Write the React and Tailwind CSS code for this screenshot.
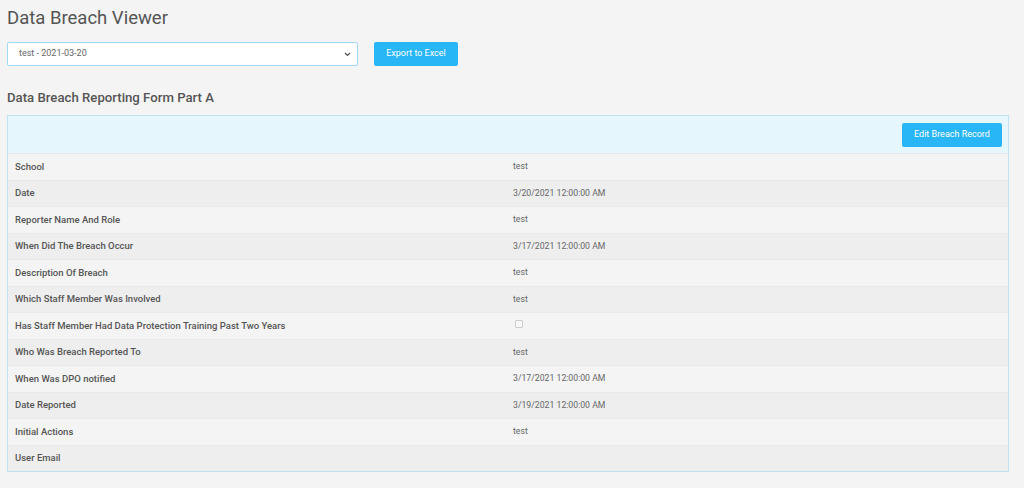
import React from 'react';

const rows = [
  { label: 'School', value: 'test' },
  { label: 'Date', value: '3/20/2021 12:00:00 AM' },
  { label: 'Reporter Name And Role', value: 'test' },
  { label: 'When Did The Breach Occur', value: '3/17/2021 12:00:00 AM' },
  { label: 'Description Of Breach', value: 'test' },
  { label: 'Which Staff Member Was Involved', value: 'test' },
  { label: 'Has Staff Member Had Data Protection Training Past Two Years', checkbox: true },
  { label: 'Who Was Breach Reported To', value: 'test' },
  { label: 'When Was DPO notified', value: '3/17/2021 12:00:00 AM' },
  { label: 'Date Reported', value: '3/19/2021 12:00:00 AM' },
  { label: 'Initial Actions', value: 'test' },
  { label: 'User Email', value: '' },
];

const App = () => {
  return (
    <div className="min-h-screen bg-[#f4f4f4] text-[#555] px-[7px] pt-[6px] font-['Roboto',sans-serif]">
      <h1 className="text-[18.5px] leading-[24px] text-[#555]">Data Breach Viewer</h1>

      <div className="flex items-center mt-[12px]">
        <div className="relative w-[351px] h-[24px] bg-white border border-[#9fd9f6] rounded-[2px] flex items-center">
          <span className="pl-[11px] text-[9px] text-[#666]">test - 2021-03-20</span>
          <svg className="absolute right-[6px] top-[9px]" width="7" height="5" viewBox="0 0 7 5">
            <path d="M1 1l2.5 2.5L6 1" fill="none" stroke="#555" strokeWidth="1.2" />
          </svg>
        </div>
        <button className="ml-[16px] w-[84px] h-[24px] bg-[#29b6f6] rounded-[2px] text-white text-[9px]">
          Export to Excel
        </button>
      </div>

      <h2 className="mt-[23px] text-[13.2px] leading-[18px] font-medium text-[#555]">Data Breach Reporting Form Part A</h2>

      <div className="mt-[8px] w-[1002px] border border-[#bfe3ee]">
        <div className="h-[37px] bg-[#e6f6fd] flex items-center justify-end pr-[6px]">
          <button className="w-[100px] h-[24px] bg-[#29b6f6] rounded-[2px] text-white text-[9px]">
            Edit Breach Record
          </button>
        </div>
        {rows.map((row, i) => (
          <div
            key={row.label}
            className={`flex items-center h-[26.5px] border-t border-[#e8e8e8] ${i % 2 === 0 ? 'bg-[#f4f4f4]' : 'bg-[#eeeeee]'}`}
          >
            <div className="w-[497px] pl-[7px] text-[9.5px] font-medium text-[#555]">{row.label}</div>
            <div className="pl-[8px] text-[8.7px] text-[#666]">
              {row.checkbox ? (
                <div className="ml-[2px] -mt-[3px] w-[8px] h-[8px] border border-[#ccc] rounded-[1px] bg-[#f8f8f8]" />
              ) : (
                row.value
              )}
            </div>
          </div>
        ))}
      </div>
    </div>
  );
};

export default App;
